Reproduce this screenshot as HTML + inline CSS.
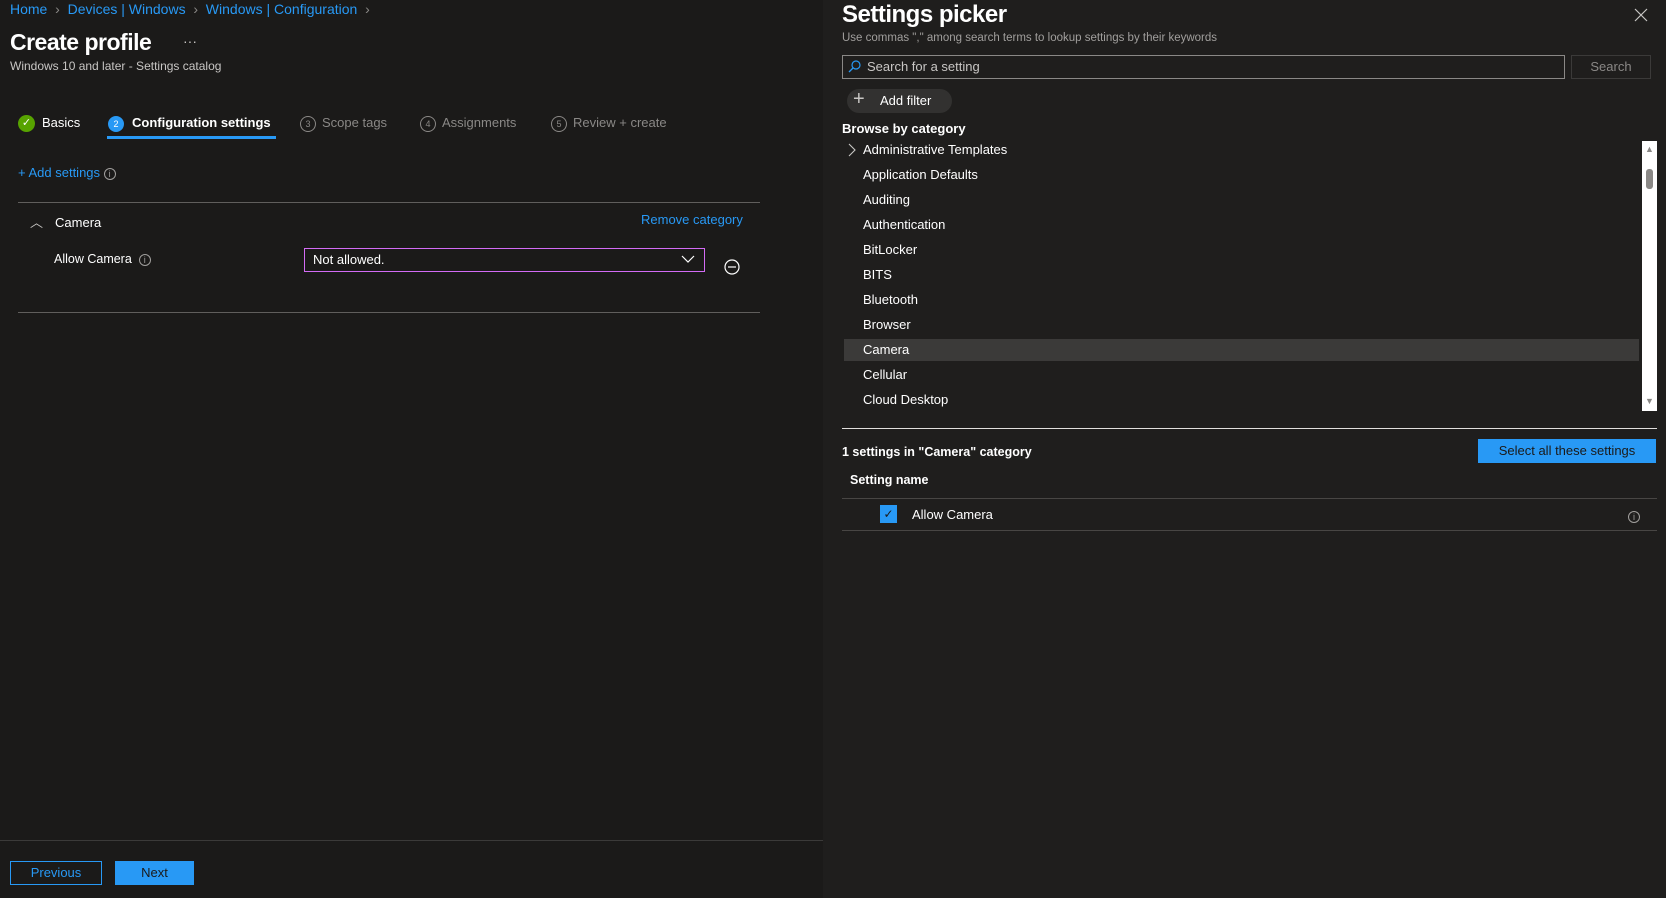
<!DOCTYPE html>
<html><head><meta charset="utf-8"><style>
*{margin:0;padding:0;box-sizing:border-box}
body{width:1666px;height:898px;background:#1b1a19;font-family:"Liberation Sans",sans-serif;color:#fff;position:relative;overflow:hidden;font-size:13px}
.a{position:absolute;white-space:nowrap}
.blue{color:#2899f5}
.gray{color:#8a8886}
.line{position:absolute;height:1px;background:#484644}
.circ{display:inline-block;width:16px;height:16px;border-radius:50%;border:1px solid #8a8886;font-size:9px;text-align:center;line-height:14px;color:#8a8886;vertical-align:middle;margin-right:6px}
.info{display:inline-block;width:12px;height:12px;border-radius:50%;border:1px solid #a19f9d;font-size:9px;line-height:10px;text-align:center;color:#a19f9d;vertical-align:middle}
.li{position:absolute;left:863px;font-size:13px}
</style></head><body>
<!-- left -->
<div class="a blue" style="left:10px;top:1px;font-size:14px">Home <span class="gray">&nbsp;›&nbsp;</span> Devices | Windows <span class="gray">&nbsp;›&nbsp;</span> Windows | Configuration <span class="gray">&nbsp;›</span></div>
<div class="a" style="left:10px;top:29px;font-size:23px;font-weight:bold;letter-spacing:-0.5px">Create profile</div>
<div class="a" style="left:183px;top:33px;font-size:14px;color:#c8c6c4">···</div>
<div class="a" style="left:10px;top:59px;font-size:12px;color:#c8c6c4">Windows 10 and later - Settings catalog</div>

<div class="a" style="left:18px;top:115px;font-size:13px">
<span style="display:inline-block;width:17px;height:17px;border-radius:50%;background:#57a300;vertical-align:middle;text-align:center;line-height:17px;font-size:11px;margin-right:7px">✓</span>Basics</div>
<div class="a" style="left:108px;top:115px;font-size:13px;font-weight:bold">
<span style="display:inline-block;width:16px;height:16px;border-radius:50%;background:#2899f5;vertical-align:middle;text-align:center;line-height:16px;font-size:9px;font-weight:normal;margin-right:8px">2</span>Configuration settings</div>
<div style="position:absolute;left:107px;top:136px;width:169px;height:3px;background:#2899f5"></div>
<div class="a gray" style="left:300px;top:115px;font-size:13px"><span class="circ">3</span>Scope tags</div>
<div class="a gray" style="left:420px;top:115px;font-size:13px"><span class="circ">4</span>Assignments</div>
<div class="a gray" style="left:551px;top:115px;font-size:13px"><span class="circ">5</span>Review + create</div>

<div class="a blue" style="left:18px;top:165px;font-size:13px">+ Add settings <span class="info">i</span></div>
<div class="line" style="left:18px;top:202px;width:742px;background:#605e5c"></div>
<div class="a" style="left:30px;top:212px;font-size:13px"><span style="color:#c8c6c4;margin-right:12px">︿</span>Camera</div>
<div class="a blue" style="left:641px;top:212px;font-size:13px">Remove category</div>
<div class="a" style="left:54px;top:252px;font-size:12.5px">Allow Camera &nbsp;<span class="info">i</span></div>
<div style="position:absolute;left:304px;top:248px;width:401px;height:24px;border:1px solid #d36bf5;background:#1b1a19"></div>
<div class="a" style="left:313px;top:252px;font-size:13px">Not allowed.</div>
<svg class="a" style="left:681px;top:254px" width="14" height="10"><path d="M1 2 L7 8 L13 2" stroke="#fff" fill="none" stroke-width="1.2"/></svg>
<svg class="a" style="left:724px;top:259px" width="16" height="16"><circle cx="8" cy="8" r="7" stroke="#fff" fill="none" stroke-width="1.2"/><path d="M4 8 H12" stroke="#fff" stroke-width="1.2"/></svg>
<div class="line" style="left:18px;top:312px;width:742px;background:#605e5c"></div>

<div class="line" style="left:0;top:840px;width:823px;background:#3b3a39"></div>
<div style="position:absolute;left:10px;top:861px;width:92px;height:24px;border:1px solid #2899f5;color:#2899f5;text-align:center;line-height:22px;font-size:13px">Previous</div>
<div style="position:absolute;left:115px;top:861px;width:79px;height:24px;background:#2899f5;color:#1b1a19;text-align:center;line-height:24px;font-size:13px">Next</div>

<!-- right -->
<div style="position:absolute;left:823px;top:0;width:843px;height:898px;background:#1f1e1d"></div>
<div class="a" style="left:842px;top:1px;font-size:24px;font-weight:bold;letter-spacing:-0.5px">Settings picker</div>
<svg class="a" style="left:1634px;top:8px" width="14" height="14"><path d="M1 1 L13 13 M13 1 L1 13" stroke="#c8c6c4" stroke-width="1.2"/></svg>
<div class="a" style="left:842px;top:32px;font-size:11.5px;color:#a19f9d">Use commas "," among search terms to lookup settings by their keywords</div>
<div style="position:absolute;left:842px;top:55px;width:723px;height:24px;border:1px solid #8a8886"></div>
<svg class="a" style="left:848px;top:60px" width="13" height="13"><circle cx="8" cy="5" r="4" stroke="#2899f5" fill="none" stroke-width="1.2"/><path d="M5 8 L1 12" stroke="#2899f5" stroke-width="1.3"/></svg>
<div class="a" style="left:867px;top:59px;font-size:13px;color:#c8c6c4">Search for a setting</div>
<div style="position:absolute;left:1571px;top:55px;width:80px;height:24px;border:1px solid #3b3a39;color:#8a8886;text-align:center;line-height:22px;font-size:13px">Search</div>
<div style="position:absolute;left:847px;top:89px;width:105px;height:24px;border-radius:12px;background:#323130"></div>
<div class="a" style="left:853px;top:88px;font-size:20px;color:#c8c6c4;font-weight:300">+</div>
<div class="a" style="left:880px;top:93px;font-size:13px">Add filter</div>
<div class="a" style="left:842px;top:121px;font-size:13px;font-weight:bold">Browse by category</div>

<div style="position:absolute;left:844px;top:339px;width:795px;height:22px;background:#3b3a39"></div>
<svg class="a" style="left:848px;top:143px" width="8" height="14"><path d="M1 1 L7 7 L1 13" stroke="#c8c6c4" fill="none" stroke-width="1.1"/></svg>
<div class="li" style="top:142px">Administrative Templates</div>
<div class="li" style="top:167px">Application Defaults</div>
<div class="li" style="top:192px">Auditing</div>
<div class="li" style="top:217px">Authentication</div>
<div class="li" style="top:242px">BitLocker</div>
<div class="li" style="top:267px">BITS</div>
<div class="li" style="top:292px">Bluetooth</div>
<div class="li" style="top:317px">Browser</div>
<div class="li" style="top:342px">Camera</div>
<div class="li" style="top:367px">Cellular</div>
<div class="li" style="top:392px">Cloud Desktop</div>
<div style="position:absolute;left:1642px;top:141px;width:15px;height:270px;background:#fff"></div>
<div class="a" style="left:1645px;top:144px;font-size:9px;color:#8a8886">▲</div>
<div style="position:absolute;left:1646px;top:169px;width:7px;height:20px;border-radius:3px;background:#8a8886"></div>
<div class="a" style="left:1645px;top:396px;font-size:9px;color:#8a8886">▼</div>

<div class="line" style="left:842px;top:428px;width:815px;background:#e1dfdd"></div>
<div class="a" style="left:842px;top:445px;font-size:12.5px;font-weight:bold">1 settings in "Camera" category</div>
<div style="position:absolute;left:1478px;top:439px;width:178px;height:24px;background:#2899f5;color:#1b1a19;text-align:center;line-height:24px;font-size:13px">Select all these settings</div>
<div class="a" style="left:850px;top:473px;font-size:12.5px;font-weight:bold">Setting name</div>
<div class="line" style="left:842px;top:498px;width:815px;background:#484644"></div>
<div style="position:absolute;left:880px;top:505px;width:17px;height:18px;background:#2899f5;color:#1b1a19;font-size:12px;text-align:center;line-height:18px">✓</div>
<div class="a" style="left:912px;top:507px;font-size:13px">Allow Camera</div>
<div class="a" style="left:1628px;top:508px"><span class="info">i</span></div>
<div class="line" style="left:842px;top:530px;width:815px;background:#484644"></div>
</body></html>
